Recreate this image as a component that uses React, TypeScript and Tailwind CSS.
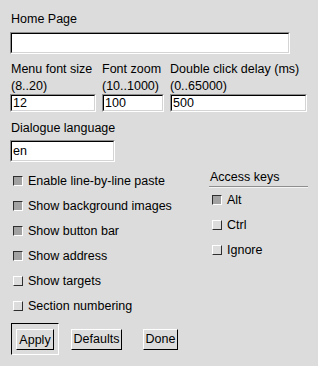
import React from 'react'

const Field = ({ value = '', className = '' }: { value?: string; className?: string }) => (
  <div className={`border border-t-[#8e8e8e] border-l-[#8e8e8e] border-b-white border-r-white ${className}`}>
    <div className="h-full border border-t-black border-l-black border-b-[#d4d4d4] border-r-[#d4d4d4] bg-white pl-[1px] flex items-center">
      {value}
    </div>
  </div>
)

const Check = ({ checked, label }: { checked: boolean; label: string }) => (
  <div className="h-[25px] flex items-center pl-[3px] gap-[5px]">
    <span
      className={
        checked
          ? 'w-[10px] h-[10px] border border-t-[#2e2e2e] border-l-[#2e2e2e] border-b-white border-r-white bg-[#a2a2a2]'
          : 'w-[10px] h-[10px] border border-t-white border-l-white border-b-[#2e2e2e] border-r-[#2e2e2e] bg-[#dcdcdc]'
      }
    />
    <span>{label}</span>
  </div>
)

const Button = ({ label, className = '' }: { label: string; className?: string }) => (
  <div
    className={`h-[21px] flex items-center justify-center border border-t-white border-l-white border-b-black border-r-black bg-[#dcdcdc] ${className}`}
  >
    {label}
  </div>
)

export default function App() {
  return (
    <div className="w-[318px] h-[366px] bg-[#dcdcdc] text-black text-[12.5px] leading-[16px] font-['Liberation_Sans',Arial,sans-serif] pt-[11px] pl-[10px]">
      <div className="pl-px h-[16px]">Home Page</div>
      <Field className="mt-[5px] w-[280px] h-[22px]" />

      <div className="flex gap-[6px] mt-[7px]">
        <div className="w-[86px]">
          <div className="pl-px h-[17px] whitespace-nowrap">Menu font size</div>
          <div className="pl-px h-[16px]">(8..20)</div>
          <Field value="12" className="h-[18px]" />
        </div>
        <div className="w-[62px]">
          <div className="h-[17px] whitespace-nowrap">Font zoom</div>
          <div className="h-[16px]">(10..1000)</div>
          <Field value="100" className="h-[18px]" />
        </div>
        <div className="w-[137px]">
          <div className="h-[17px] whitespace-nowrap">Double click delay (ms)</div>
          <div className="h-[16px]">(0..65000)</div>
          <Field value="500" className="h-[18px]" />
        </div>
      </div>

      <div className="pl-px h-[16px] mt-[8px]">Dialogue language</div>
      <Field value="en" className="mt-[4px] w-[105px] h-[22px]" />

      <div className="flex mt-[6px]">
        <div className="w-[199px]">
          <Check checked label="Enable line-by-line paste" />
          <Check checked label="Show background images" />
          <Check checked label="Show button bar" />
          <Check checked label="Show address" />
          <Check checked={false} label="Show targets" />
          <Check checked={false} label="Section numbering" />
        </div>
        <div className="w-[99px]">
          <div className="h-[19px] pt-[1px] pl-px border-b border-b-[#8e8e8e] shadow-[0_1px_0_#f4f4f4]">Access keys</div>
          <Check checked label="Alt" />
          <Check checked={false} label="Ctrl" />
          <Check checked={false} label="Ignore" />
        </div>
      </div>

      <div className="flex items-center mt-[5px] pl-px">
        <div className="w-[48px] h-[32px] border border-t-black border-l-black border-b-white border-r-white flex items-center justify-center pt-px">
          <Button label="Apply" className="w-[38px]" />
        </div>
        <Button label="Defaults" className="w-[51px] ml-[12px]" />
        <Button label="Done" className="w-[35px] ml-[21px]" />
      </div>
    </div>
  )
}
